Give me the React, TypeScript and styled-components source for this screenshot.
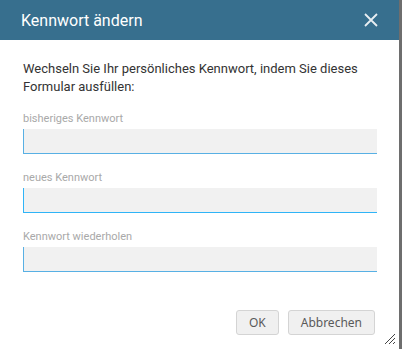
import React from "react";
import styled, { createGlobalStyle } from "styled-components";

const GlobalStyle = createGlobalStyle`
  html, body {
    margin: 0;
    padding: 0;
    background: #fff;
  }
  body {
    font-family: Roboto, "Liberation Sans", sans-serif;
  }
`;

const Frame = styled.div`
  width: 402px;
  height: 349px;
  display: flex;
  flex-direction: row;
  overflow: hidden;
`;

const Dialog = styled.div`
  position: relative;
  width: 399px;
  height: 349px;
  display: flex;
  flex-direction: column;
  background: #fff;
`;

const Edge = styled.div`
  width: 3px;
  height: 100%;
  background: #6e6e6e;
`;

const Header = styled.div`
  height: 40px;
  background: #376f8e;
  display: flex;
  flex-direction: row;
  align-items: center;
  justify-content: space-between;
  padding: 0 21px 0 21px;
`;

const Title = styled.div`
  color: #fff;
  font-size: 16px;
  margin-top: 1px;
`;

const Close = styled.button`
  background: transparent;
  border: none;
  padding: 0;
  width: 14px;
  height: 14px;
  display: flex;
  cursor: pointer;
`;

const Body = styled.div`
  flex: 1;
  display: flex;
  flex-direction: column;
  padding: 20px 22px 0 23px;
`;

const Intro = styled.p`
  margin: 0 0 15px 0;
  font-size: 13px;
  line-height: 18px;
  color: #333;
`;

const Field = styled.div`
  display: flex;
  flex-direction: column;
  margin-bottom: 16px;
`;

const Label = styled.label`
  display: block;
  font-size: 11px;
  line-height: 15px;
  color: #a9a9a9;
  height: 18px;
`;

const Input = styled.input<{ focused?: boolean }>`
  box-sizing: border-box;
  height: 25px;
  width: 100%;
  background: #f1f1f1;
  border: none;
  border-left: 1px solid ${(props) => (props.focused ? "#2fb4f7" : "#58b0e4")};
  border-bottom: 1px solid ${(props) => (props.focused ? "#2fb4f7" : "#58b0e4")};
  outline: none;
  padding: 0 6px;
  font-family: Roboto, "Liberation Sans", sans-serif;
  font-size: 13px;
`;

const Footer = styled.div`
  display: flex;
  flex-direction: row;
  justify-content: flex-end;
  gap: 9px;
  padding: 0 24px 14px 0;
`;

const Button = styled.button`
  height: 25px;
  padding: 0 12px;
  border: 1px solid #d4d4d4;
  border-radius: 3px;
  background: #f0f0f0;
  color: #5a5a5a;
  font-family: "Noto Sans", "Open Sans", sans-serif;
  font-size: 12px;
  cursor: pointer;
`;

const Grip = styled.svg`
  position: absolute;
  right: 3px;
  bottom: 4px;
  width: 12px;
  height: 12px;
`;

export default function App() {
  return (
    <>
      <GlobalStyle />
      <Frame>
        <Dialog>
          <Header>
            <Title>Kennwort ändern</Title>
            <Close aria-label="Schließen">
              <svg width="14" height="14" viewBox="0 0 14 14">
                <path
                  d="M1 1L13 13M13 1L1 13"
                  stroke="#e8eef2"
                  strokeWidth="1.8"
                  fill="none"
                />
              </svg>
            </Close>
          </Header>
          <Body>
            <Intro>
              Wechseln Sie Ihr persönliches Kennwort, indem Sie dieses Formular
              ausfüllen:
            </Intro>
            <Field>
              <Label>bisheriges Kennwort</Label>
              <Input type="password" />
            </Field>
            <Field>
              <Label>neues Kennwort</Label>
              <Input type="password" focused />
            </Field>
            <Field>
              <Label>Kennwort wiederholen</Label>
              <Input type="password" />
            </Field>
          </Body>
          <Footer>
            <Button>OK</Button>
            <Button>Abbrechen</Button>
          </Footer>
          <Grip viewBox="0 0 12 12">
            <path
              d="M11 1L1 11M11 5L5 11M11 9L9 11"
              stroke="#444"
              strokeWidth="1"
              fill="none"
            />
          </Grip>
        </Dialog>
        <Edge />
      </Frame>
    </>
  );
}
